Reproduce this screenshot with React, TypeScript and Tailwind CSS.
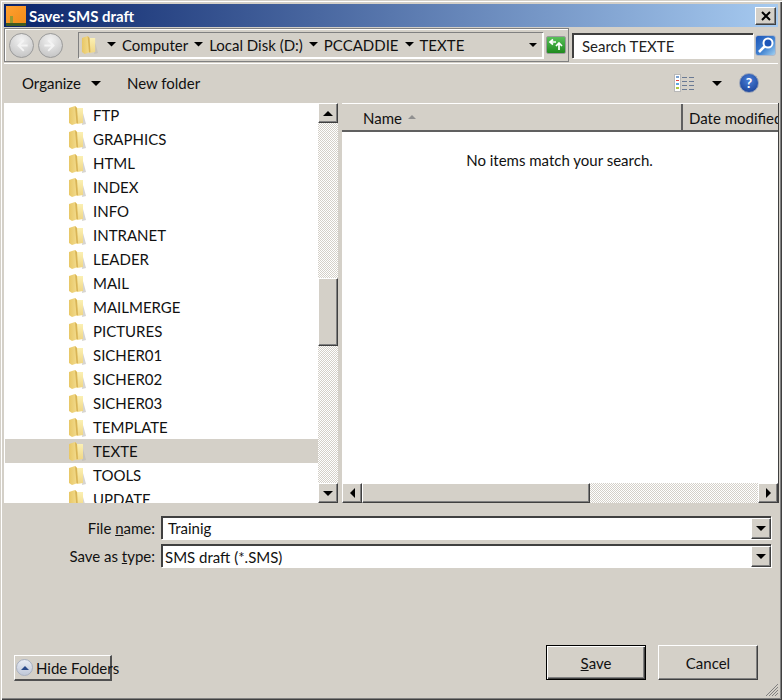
const FONT = "font-['Lato','Noto_Sans',sans-serif]";
const RAISED = "border-t border-l border-r border-b border-t-white border-l-white border-r-[#404040] border-b-[#404040] bg-[#d4d0c8] shadow-[inset_-1px_-1px_0_#808080]";

function Tri({ dir = "down", size = 5, color = "#000" }: { dir?: "down" | "up" | "left" | "right"; size?: number; color?: string }) {
  const p = { down: "0,0 10,0 5,5", up: "5,0 10,5 0,5", left: "5,0 5,10 0,5", right: "0,0 5,5 0,10" }[dir];
  const vert = dir === "down" || dir === "up";
  return (
    <svg width={vert ? size * 2 : size} height={vert ? size : size * 2} viewBox={vert ? "0 0 10 5" : "0 0 5 10"} className="shrink-0 block">
      <polygon points={p} fill={color} />
    </svg>
  );
}

function Folder({ w = 18, h = 21 }: { w?: number; h?: number }) {
  return (
    <svg width={w} height={h} viewBox="0 0 18 21" className="shrink-0 block">
      <defs>
        <linearGradient id="fb" x1="0" x2="1" y1="0" y2="0">
          <stop offset="0" stopColor="#e8c766" />
          <stop offset="1" stopColor="#f4de92" />
        </linearGradient>
        <linearGradient id="ff" x1="0" x2="0" y1="0" y2="1">
          <stop offset="0" stopColor="#fbf0b4" />
          <stop offset="1" stopColor="#f0d683" />
        </linearGradient>
      </defs>
      <path d="M15 8 L18 19 L14 20 Z" fill="#bdb9b0" opacity="0.6" />
      <path d="M9 3 L15 3 L15 18 L9 19 Z" fill="url(#ff)" />
      <path d="M1 3 L7 1 L9 3 L10 18 L4 20 L1 18 Z" fill="url(#fb)" />
      <path d="M7 1 L9 3 L10 18 L8.5 18.5 Z" fill="#d9b455" />
    </svg>
  );
}

const FOLDERS = ["FTP", "GRAPHICS", "HTML", "INDEX", "INFO", "INTRANET", "LEADER", "MAIL", "MAILMERGE", "PICTURES", "SICHER01", "SICHER02", "SICHER03", "TEMPLATE", "TEXTE", "TOOLS", "UPDATE"];

function Crumb({ label }: { label: string }) {
  return (
    <>
      <span className="ml-[6px] mr-[6px]"><Tri size={4.5} /></span>
      <span className="whitespace-nowrap">{label}</span>
    </>
  );
}

function ScrollBtn({ dir, cls }: { dir: "up" | "down" | "left" | "right"; cls: string }) {
  return (
    <div className={`${RAISED} ${cls} flex items-center justify-center shrink-0`}>
      <Tri dir={dir} size={5} />
    </div>
  );
}

const DITHER = "bg-[repeating-conic-gradient(#d4d0c8_0_25%,#ffffff_0_50%)] bg-[length:2px_2px]";

function Combo({ children }: { children: React.ReactNode }) {
  return (
    <div className="w-[610px] h-[23px] bg-white border-t-2 border-l-2 border-t-[#404040] border-l-[#404040] shadow-[1px_1px_0_#ffffff] flex items-center justify-between relative">
      {children}
      <div className={`${RAISED} w-[20px] h-[21px] flex items-center justify-center shrink-0`}><Tri /></div>
    </div>
  );
}

export default function App() {
  return (
    <div className={`${FONT} w-[782px] h-[700px] bg-[#d4d0c8] text-[15px] leading-[20px] text-[#111] flex flex-col pt-[4px] pl-[4px] pr-[3px] overflow-hidden shadow-[inset_1px_1px_0_#d4d0c8,inset_2px_2px_0_#ffffff,inset_-1px_-1px_0_#404040,inset_-2px_-2px_0_#808080] relative`}>
      {/* Title */}
      <div className="h-[23px] shrink-0 w-[774px] bg-[linear-gradient(to_right,#0a246a,#a6caf0)] flex items-center pl-[2px] pr-[2px] justify-between">
        <div className="flex items-center">
          <div className="w-[20px] h-[20px] bg-[linear-gradient(135deg,#ffa030,#f08a18)] relative">
            <div className="absolute bottom-0 left-0 right-0 h-[3px] bg-[#3f5a20]" />
            <div className="absolute bottom-[3px] left-[4px] w-[3px] h-[7px] bg-[#9a9a30]" />
          </div>
          <span className="ml-[3px] text-white font-bold text-[15px]">Save: SMS draft</span>
        </div>
        <div className={`${RAISED} w-[21px] h-[18px] flex items-center justify-center`}>
          <svg width="10" height="10" viewBox="0 0 10 10"><path d="M1 1 L9 9 M9 1 L1 9" stroke="#000" strokeWidth="2" /></svg>
        </div>
      </div>

      {/* Address row */}
      <div className="h-[36px] shrink-0 flex items-center w-[774px]">
        <div className="w-[565px] h-[34px] border border-[#808080] shadow-[inset_1px_1px_0_#fff] flex items-center pl-[4px] shrink-0">
          <div className="flex items-center w-[69px] shrink-0">
            {["M18 7 L11 14 L18 21 M11 14 L23 14", "M12 7 L19 14 L12 21 M19 14 L7 14"].map((d, i) => (
              <div key={i} className={`w-[25px] h-[25px] rounded-full border border-[#9a9a9a] bg-[radial-gradient(circle_at_50%_25%,#f2f2f2,#bdbdbd)] flex items-center justify-center shrink-0 ${i === 1 ? "ml-[4px]" : ""}`}>
                <svg width="23" height="23" viewBox="0 0 30 28"><path d={d} fill="none" stroke="#f4f4f4" strokeWidth="2.4" /></svg>
              </div>
            ))}
          </div>
          <div className="w-[465px] h-[26px] border-l border-t border-[#808080] shadow-[inset_-1px_-1px_0_#fff,1px_1px_0_#fff] flex items-center pl-[2px] pb-[2px] shrink-0">
            <Folder w={17} h={20} />
            <span className="ml-[3px]" />
            <Crumb label="Computer" />
            <Crumb label="Local Disk (D:)" />
            <Crumb label="PCCADDIE" />
            <Crumb label="TEXTE" />
            <span className="ml-auto mr-[6px]"><Tri size={4} /></span>
          </div>
          <div className="ml-[3px] w-[20px] h-[18px] rounded-[2px] border border-[#9a9a9a] bg-[linear-gradient(#58c058,#1f8a1f)] flex items-center justify-center shrink-0">
            <svg width="16" height="14" viewBox="0 0 16 14"><path d="M8 4 H3 M5 1.5 L2 4 L5 6.5 M11 12 V6 M8 8 L11 5 L14 8" fill="none" stroke="#fff" strokeWidth="1.7" /></svg>
          </div>
        </div>
        <div className="ml-[3px] w-[181px] h-[25px] bg-white border-t-2 border-l-2 border-t-[#404040] border-l-[#404040] shadow-[1px_1px_0_#fff] pl-[8px] flex items-center text-[#222] shrink-0">Search TEXTE</div>
        <div className="ml-[2px] w-[21px] h-[21px] rounded-[3px] border border-[#b0b8c8] bg-[linear-gradient(135deg,#1c55b8,#3f80d0_55%,#a0d0f0)] flex items-center justify-center shrink-0">
          <svg width="18" height="18" viewBox="0 0 18 18"><circle cx="11" cy="7" r="4.5" fill="#1c55b8" stroke="#fff" strokeWidth="2" /><path d="M7.5 10.5 L2 16" stroke="#fff" strokeWidth="2.6" /></svg>
        </div>
      </div>

      {/* Toolbar */}
      <div className="h-[40px] shrink-0 w-[774px] border-t border-t-white flex items-center pl-[18px] pb-[1px]">
        <span>Organize</span>
        <span className="ml-[10px]"><Tri /></span>
        <span className="ml-[26px]">New folder</span>
        <div className="ml-auto flex items-center mr-[19px]">
          <svg width="20" height="18" viewBox="0 0 20 18" className="block">
            <rect x="0.5" y="0.5" width="6" height="17" fill="#fff" stroke="#b8b8b8" />
            <rect x="2" y="2" width="3" height="2" fill="#7aa0d0" /><rect x="2" y="6" width="3" height="1" fill="#e04040" /><rect x="2" y="9" width="3" height="2" fill="#60a8e0" /><rect x="2" y="13" width="3" height="2" fill="#b0c840" />
            <path d="M8 3.5 H13 M15 3.5 H20 M8 7.5 H13 M15 7.5 H20 M8 11.5 H13 M15 11.5 H20 M8 15.5 H13 M15 15.5 H20" stroke="#6a7a94" />
          </svg>
          <span className="ml-[18px]"><Tri /></span>
          <div className="ml-[17px] w-[20px] h-[20px] rounded-full bg-[radial-gradient(circle_at_50%_35%,#4a80d8,#143a90)] border border-[#9aa4b8] text-white font-bold text-[14px] flex items-center justify-center">?</div>
        </div>
      </div>

      {/* Main */}
      <div className="h-[400px] shrink-0 w-[775px] flex bg-white">
        <div className="w-[314px] shrink-0 overflow-hidden pl-[1px]">
          {FOLDERS.map((f) => (
            <div key={f} className={`h-[24px] flex items-center pl-[63px] shrink-0 ${f === "TEXTE" ? "bg-[#d4d0c8]" : ""}`}>
              <Folder />
              <span className="ml-[7px]">{f}</span>
            </div>
          ))}
        </div>
        <div className="w-[20px] shrink-0 flex flex-col">
          <ScrollBtn dir="up" cls="h-[20px]" />
          <div className={`h-[155px] ${DITHER}`} />
          <div className={`${RAISED} h-[68px]`} />
          <div className={`flex-1 ${DITHER}`} />
          <ScrollBtn dir="down" cls="h-[20px]" />
        </div>
        <div className="w-[4px] shrink-0 bg-[#d4d0c8]" />
        <div className="w-[437px] shrink-0 flex flex-col border-r border-r-[#404040]">
          <div className="h-[29px] shrink-0 flex bg-[#d4d0c8] border-t border-t-white border-b-2 border-b-[#606060]">
            <div className="w-[341px] shrink-0 border-r-2 border-r-[#606060] flex items-center pl-[21px] pt-[2px]">
              <span>Name</span>
              <span className="ml-[6px] -mt-[2px]"><Tri dir="up" size={4} color="#909090" /></span>
            </div>
            <div className="pl-[6px] pt-[2px] flex items-center whitespace-nowrap overflow-hidden">Date modified</div>
          </div>
          <div className="flex-1 pt-[18px] text-center pr-[1px]">No items match your search.</div>
          <div className="h-[20px] shrink-0 flex">
            <ScrollBtn dir="left" cls="w-[20px]" />
            <div className={`${RAISED} w-[228px]`} />
            <div className={`flex-1 ${DITHER}`} />
            <ScrollBtn dir="right" cls="w-[20px]" />
          </div>
        </div>
      </div>

      {/* Form */}
      <div className="pt-[13px] flex flex-col gap-[5px] shrink-0">
        <div className="flex items-center">
          <div className="w-[151px] text-right">File <span className="underline">n</span>ame:</div>
          <div className="ml-[6px]"><Combo><span className="pl-[5px] -mt-[2px]">Trainig</span></Combo></div>
        </div>
        <div className="flex items-center">
          <div className="w-[151px] text-right">Save as <span className="underline">t</span>ype:</div>
          <div className="ml-[6px]"><Combo><span className="pl-[2px]">SMS draft (*.SMS)</span></Combo></div>
        </div>
      </div>

      {/* Buttons */}
      <div className="flex-1 relative flex items-start pt-[78px] pr-[21px] justify-end">
        <div className="absolute left-[10px] top-[88px] h-[26px] w-[98px] border-t border-l border-t-white border-l-white border-r-2 border-b-2 border-r-[#505050] border-b-[#505050] flex items-center pl-[1px]">
          <div className="w-[17px] h-[17px] rounded-full border border-[#a8b0c0] bg-[linear-gradient(#e8ecf4,#c0c8d8)] flex items-center justify-center shrink-0"><Tri dir="up" size={4} color="#2a4a8a" /></div>
          <span className="ml-[3px] whitespace-nowrap">Hide Folders</span>
        </div>
        <div className="w-[100px] h-[35px] border border-black shadow-[inset_1px_1px_0_#fff,inset_-1px_-1px_0_#404040,inset_-2px_-2px_0_#808080] flex items-center justify-center"><span><span className="underline">S</span>ave</span></div>
        <div className={`${RAISED} ml-[12px] w-[100px] h-[35px] flex items-center justify-center`}>Cancel</div>
      </div>

      {/* Grip */}
      <svg width="14" height="14" viewBox="0 0 14 14" className="absolute right-[3px] bottom-[3px]">
        <path d="M13 1 L1 13 M13 4 L4 13 M13 7 L7 13 M13 10 L10 13" stroke="#808080" />
      </svg>
    </div>
  );
}
